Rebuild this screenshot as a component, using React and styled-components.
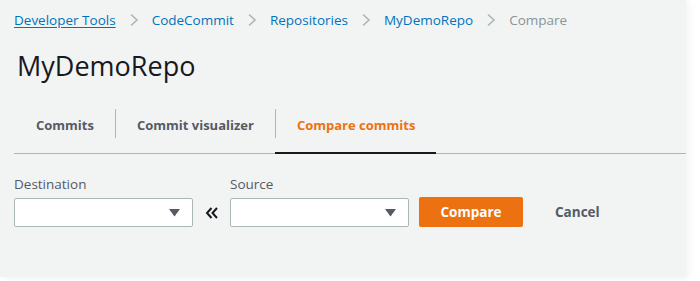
import React from 'react';
import styled, { createGlobalStyle } from 'styled-components';

const GlobalStyle = createGlobalStyle`
  html, body {
    margin: 0;
    padding: 0;
    background: #ffffff;
    font-family: "Open Sans", "Noto Sans", Arial, sans-serif;
  }
`;

const Frame = styled.div`
  width: 700px;
  height: 281px;
  overflow: hidden;
  background: #ffffff;
`;

const Panel = styled.div`
  width: 686px;
  height: 277px;
  background: #f2f3f3;
  box-shadow: 2px 1px 8px rgba(0, 0, 0, 0.06);
  box-sizing: border-box;
  padding: 9px 0 0 14px;
`;

const Crumbs = styled.nav`
  display: flex;
  align-items: center;
  gap: 13px;
  height: 22px;
  font-size: 13.5px;
`;

const Crumb = styled.a`
  color: ${p => (p.$current ? '#879596' : '#0073bb')};
  text-decoration: ${p => (p.$underline ? 'underline' : 'none')};
  text-underline-offset: 2px;
`;

const Chevron = () => (
  <svg width="10" height="14" viewBox="0 0 10 14">
    <path d="M2 1.5 L8 7 L2 12.5" fill="none" stroke="#aab7b8" strokeWidth="1.6" />
  </svg>
);

const Title = styled.h1`
  margin: 18px 0 0 3px;
  font-size: 27px;
  font-weight: 400;
  color: #16191f;
  line-height: 34px;
`;

const Tabs = styled.div`
  display: flex;
  margin-top: 14px;
  border-bottom: 1px solid #aab7b8;
  height: 56px;
`;

const Tab = styled.div`
  display: flex;
  align-items: center;
  padding: 0 21px 0 22px;
  font-size: 13px;
  font-weight: 700;
  color: ${p => (p.$active ? '#ec7211' : '#545b64')};
  border-bottom: 2px solid ${p => (p.$active ? '#16191f' : 'transparent')};
  margin-bottom: -1px;
  position: relative;
  &::before {
    content: '';
    display: ${p => (p.$divided ? 'block' : 'none')};
    position: absolute;
    left: 0;
    top: 12px;
    height: 29px;
    width: 1px;
    background: #aab7b8;
  }
`;

const Form = styled.div`
  display: flex;
  align-items: flex-end;
  margin-top: 22px;
`;

const Field = styled.div`
  display: flex;
  flex-direction: column;
  gap: 5px;
`;

const Label = styled.label`
  font-size: 13.5px;
  color: #545b64;
  line-height: 17px;
`;

const Select = styled.div`
  width: 179px;
  height: 29px;
  box-sizing: border-box;
  background: #ffffff;
  border: 1px solid #aab7b8;
  border-radius: 2px;
  display: flex;
  align-items: center;
  justify-content: flex-end;
  padding-right: 12px;
`;

const Caret = () => (
  <svg width="11" height="8" viewBox="0 0 11 8">
    <path d="M0 0 H11 L5.5 7.5 Z" fill="#545b64" />
  </svg>
);

const Swap = styled.span`
  width: 37px;
  height: 29px;
  display: flex;
  align-items: center;
  justify-content: center;
`;

const Primary = styled.button`
  margin-left: 10px;
  width: 104px;
  height: 30px;
  border: none;
  border-radius: 2px;
  background: #ec7211;
  color: #ffffff;
  font-family: inherit;
  font-size: 13.5px;
  font-weight: 700;
`;

const Link = styled.button`
  margin-left: 20px;
  height: 30px;
  padding: 0 12px;
  border: none;
  background: none;
  color: #545b64;
  font-family: inherit;
  font-size: 13.5px;
  font-weight: 700;
`;

export default function App() {
  return (
    <Frame>
      <GlobalStyle />
      <Panel>
        <Crumbs>
          <Crumb $underline>Developer Tools</Crumb>
          <Chevron />
          <Crumb>CodeCommit</Crumb>
          <Chevron />
          <Crumb>Repositories</Crumb>
          <Chevron />
          <Crumb>MyDemoRepo</Crumb>
          <Chevron />
          <Crumb $current>Compare</Crumb>
        </Crumbs>
        <Title>MyDemoRepo</Title>
        <Tabs>
          <Tab>Commits</Tab>
          <Tab $divided>Commit visualizer</Tab>
          <Tab $divided $active>Compare commits</Tab>
        </Tabs>
        <Form>
          <Field>
            <Label>Destination</Label>
            <Select><Caret /></Select>
          </Field>
          <Swap>
            <svg width="14" height="14" viewBox="0 0 14 14">
              <path d="M6.5 2 L2 7 L6.5 12 M12 2 L7.5 7 L12 12" fill="none" stroke="#16191f" strokeWidth="2" />
            </svg>
          </Swap>
          <Field>
            <Label>Source</Label>
            <Select><Caret /></Select>
          </Field>
          <Primary>Compare</Primary>
          <Link>Cancel</Link>
        </Form>
      </Panel>
    </Frame>
  );
}
